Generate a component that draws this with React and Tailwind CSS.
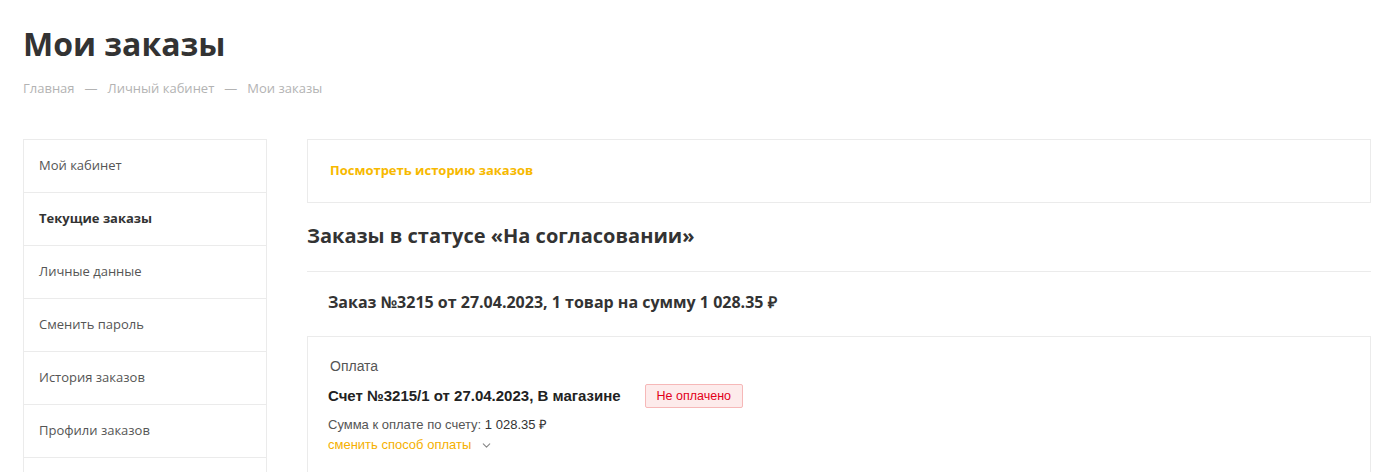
import { ChevronDown } from 'lucide-react';

const MENU = [
  { label: 'Мой кабинет' },
  { label: 'Текущие заказы', active: true },
  { label: 'Личные данные' },
  { label: 'Сменить пароль' },
  { label: 'История заказов' },
  { label: 'Профили заказов' },
  { label: '' },
];

const App = () => {
  return (
    <div className="h-[472px] overflow-hidden bg-white text-[#333] font-['Open_Sans',sans-serif] px-[23px] pt-[22px]">
      {/* Заголовок */}
      <h1 className="text-[32px] font-bold leading-[44px] text-[#333]">Мои заказы</h1>

      {/* Хлебные крошки */}
      <div className="mt-[13px] flex items-center text-[13px] text-[#b3b3b3] leading-[18px]">
        <span>Главная</span>
        <span className="mx-[10px]">—</span>
        <span>Личный кабинет</span>
        <span className="mx-[10px]">—</span>
        <span>Мои заказы</span>
      </div>

      <div className="mt-[42px] flex gap-[40px]">
        {/* Меню */}
        <div className="w-[244px] shrink-0">
          {MENU.map((item, i) => (
            <div
              key={i}
              className={`border border-[#ebebeb] flex items-center px-[15px] text-[13px] ${i > 0 ? 'border-t-0 h-[53px]' : 'h-[54px]'} ${
                item.active ? 'font-bold text-[#333]' : 'text-[#555]'
              }`}
            >
              {item.label}
            </div>
          ))}
        </div>

        {/* Контент */}
        <div className="flex-1 mr-[-6px]">
          <div className="h-[64px] border border-[#ebebeb] flex items-center px-[22px]">
            <a className="text-[13px] font-bold text-[#f7b900] cursor-pointer">Посмотреть историю заказов</a>
          </div>

          <h2 className="mt-[19px] text-[20px] font-bold leading-[28px] text-[#333]">
            Заказы в статусе «На согласовании»
          </h2>

          <div className="mt-[21px] border-t border-[#ebebeb]" />

          <div className="pt-[18px] pb-[21px] px-[21px] text-[16px] font-bold leading-[25px] text-[#333]">
            Заказ №3215 от 27.04.2023, 1 товар на сумму 1 028.35 ₽
          </div>

          <div className="border border-[#ebebeb] h-[200px] px-[20px] pt-[20px] font-['Liberation_Sans',Arial,sans-serif]">
            <div className="ml-[2px] text-[14px] text-[#555] leading-[18px]">Оплата</div>
            <div className="mt-[9px] flex items-center">
              <span className="text-[15px] font-bold text-[#222]">Счет №3215/1 от 27.04.2023, В магазине</span>
              <span className="ml-[24px] h-[24px] px-[11px] flex items-center border border-[#f6b8b8] bg-[#fdebeb] text-[12.5px] text-[#e2001a] rounded-[2px]">
                Не оплачено
              </span>
            </div>
            <div className="mt-[9px] text-[13px] text-[#555] leading-[16px]">
              Сумма к оплате по счету: <span className="text-[#333]">1 028.35 ₽</span>
            </div>
            <div className="mt-[4px] flex items-center text-[13px] text-[#f5b000] leading-[16px]">
              <span>сменить способ оплаты</span>
              <ChevronDown className="ml-[9px] w-[13px] h-[13px] text-[#888]" strokeWidth={2} />
            </div>
          </div>
        </div>
      </div>
    </div>
  );
};

export default App;
